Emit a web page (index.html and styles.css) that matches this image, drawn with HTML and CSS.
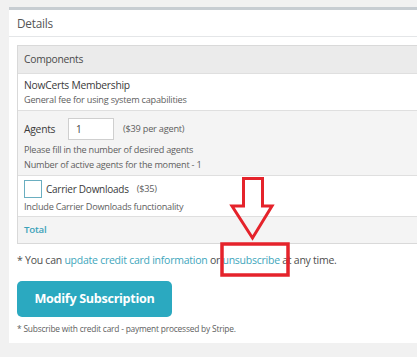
FILE: index.html
```html
<!DOCTYPE html>
<html>
<head>
<meta charset="utf-8">
<link rel="stylesheet" href="styles.css">
</head>
<body>
<div class="panel">
  <div class="panel-header">Details</div>
  <div class="panel-body">
    <div class="table">
      <div class="row row-head">Components</div>
      <div class="row row-white membership">
        <div class="title">NowCerts Membership</div>
        <div class="desc">General fee for using system capabilities</div>
      </div>
      <div class="row row-grey agents">
        <div class="agents-line">
          <span class="title">Agents</span>
          <span class="input">1</span>
          <span class="price">($39 per agent)</span>
        </div>
        <div class="desc">Please fill in the number of desired agents</div>
        <div class="desc">Number of active agents for the moment - 1</div>
      </div>
      <div class="row row-white carrier">
        <div class="carrier-line">
          <span class="check"></span>
          <span class="title">Carrier Downloads</span>
          <span class="price">($35)</span>
        </div>
        <div class="desc">Include Carrier Downloads functionality</div>
      </div>
      <div class="row row-grey total">Total</div>
    </div>
    <p class="note">* You can <span class="link">update credit card information</span> or <span class="link">unsubscribe</span> at any time.</p>
    <div class="button">Modify Subscription</div>
    <p class="foot">* Subscribe with credit card - payment processed by Stripe.</p>
  </div>
</div>
<svg class="annot" width="417" height="357" viewBox="0 0 417 357">
  <path d="M243.5 178.5 H262.5 V206 H272 L252.5 238 L232 206 H243.5 Z" fill="none" stroke="#e5232b" stroke-width="3" stroke-linejoin="miter"/>
  <rect x="222" y="244" width="66" height="31" fill="none" stroke="#e5232b" stroke-width="3.5"/>
</svg>
</body>
</html>
```
FILE: styles.css
```css
html, body {
  margin: 0;
  padding: 0;
}
body {
  background: #f1f1f1;
  font-family: "Open Sans", "Noto Sans", sans-serif;
  color: #555;
  width: 417px;
  height: 357px;
  overflow: hidden;
  position: relative;
}
.panel {
  margin: 7px 0 0 9px;
  width: 420px;
  height: 333px;
  background: #fff;
  border-top: 3px solid #c7cdd2;
}
.panel-header {
  height: 27px;
  line-height: 26px;
  padding-left: 8px;
  font-size: 11.8px;
  letter-spacing: -0.25px;
  color: #555;
  border-bottom: 1px solid #e4e6e8;
  box-sizing: border-box;
}
.panel-body {
  padding: 8px 0 0 8px;
}
.table {
  border: 1px solid #d9d9d9;
  border-right: none;
}
.row {
  padding: 0 0 0 6px;
  border-top: 1px solid #dfdfdf;
  box-sizing: border-box;
}
.row-head {
  border-top: none;
  background: #ebebeb;
  height: 27px;
  line-height: 27px;
  font-size: 10.3px;
  letter-spacing: -0.25px;
  color: #4a4a4a;
}
.row-white { background: #fff; }
.row-grey { background: #f4f4f4; }
.title {
  font-size: 10.3px;
  letter-spacing: -0.25px;
  color: #3a3a3a;
}
.desc {
  font-size: 9.15px;
  letter-spacing: -0.22px;
  color: #5e5e5e;
  line-height: 15px;
}
.membership {
  height: 37px;
  padding-top: 4px;
}
.membership .title {
  display: block;
  line-height: 14px;
}
.agents {
  height: 65px;
  padding-top: 6px;
}
.agents-line {
  display: flex;
  align-items: center;
  height: 23px;
  margin-bottom: 2px;
}
.agents-line .title {
  width: 44px;
}
.input {
  width: 46px;
  height: 22px;
  box-sizing: border-box;
  border: 1px solid #cfcfcf;
  background: #fff;
  font-size: 10px;
  color: #444;
  line-height: 20px;
  padding-left: 7px;
}
.price {
  font-size: 9.2px;
  letter-spacing: -0.22px;
  color: #5e5e5e;
  margin-left: 9px;
}
.carrier {
  height: 41px;
  padding-top: 3px;
}
.carrier-line {
  display: flex;
  align-items: center;
  height: 19px;
  margin-bottom: 1px;
}
.check {
  width: 18px;
  height: 18px;
  box-sizing: border-box;
  border: 1px solid #6aaec0;
  background: #fff;
  margin-right: 4px;
}
.carrier-line .title {
  font-size: 10px;
}
.carrier-line .price {
  margin-left: 8px;
}
.total {
  height: 27px;
  line-height: 25px;
  font-size: 9.7px;
  letter-spacing: -0.2px;
  color: #3ba2b9;
  font-weight: 600;
}
.note {
  margin: 9px 0 0 0;
  font-size: 10.5px;
  letter-spacing: -0.25px;
  color: #4e4e4e;
  line-height: 14px;
}
.link {
  color: #3ea6bc;
}
.button {
  margin-top: 14px;
  width: 155px;
  height: 36px;
  border-radius: 5px;
  background: #2ba9c0;
  color: #fff;
  font-weight: 700;
  font-size: 12.6px;
  letter-spacing: -0.3px;
  line-height: 36px;
  text-align: center;
}
.foot {
  margin: 6px 0 0 0;
  font-size: 8.4px;
  letter-spacing: -0.2px;
  color: #5e5e5e;
  line-height: 12px;
}
.annot {
  position: absolute;
  left: 0;
  top: 0;
}
```
